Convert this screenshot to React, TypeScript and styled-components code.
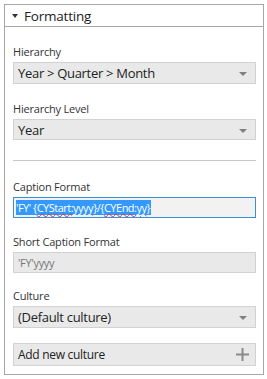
import React from 'react';
import styled, { createGlobalStyle } from 'styled-components';

const Global = createGlobalStyle`
  html, body {
    margin: 0;
    padding: 0;
    background: #ffffff;
  }
  body {
    font-family: "Open Sans", "Noto Sans", sans-serif;
    color: #222;
  }
`;

const Page = styled.div`
  width: 267px;
  height: 379px;
  padding: 4px 3px 4px 4px;
  box-sizing: border-box;
`;

const Panel = styled.div`
  height: 371px;
  border: 1px solid #a6a6a6;
  box-sizing: border-box;
  display: flex;
  flex-direction: column;
`;

const Header = styled.div`
  height: 21px;
  display: flex;
  align-items: center;
  gap: 6px;
  padding-left: 7px;
  border-bottom: 1px solid #a6a6a6;
  font-size: 13.5px;
  letter-spacing: -0.2px;
  color: #222;
`;

const Caret = styled.span`
  width: 0;
  height: 0;
  border-left: 3px solid transparent;
  border-right: 3px solid transparent;
  border-top: 4px solid #333;
`;

const Body = styled.div`
  padding: 17px 7px 0 8px;
  display: flex;
  flex-direction: column;
`;

const Field = styled.div<{ $gap?: number }>`
  display: flex;
  flex-direction: column;
  margin-bottom: ${(p) => p.$gap ?? 15}px;
`;

const Label = styled.div`
  font-size: 11px;
  letter-spacing: -0.2px;
  line-height: 16px;
  height: 16px;
  margin-bottom: 2px;
  color: #333;
`;

const Box = styled.div<{ $focus?: boolean; $h?: number }>`
  height: ${(p) => p.$h ?? 22}px;
  box-sizing: border-box;
  border: 1px solid ${(p) => (p.$focus ? '#3b8fd9' : '#d2d2d2')};
  background: ${(p) => (p.$focus ? '#f2f2f2' : '#e9e9e9')};
  display: flex;
  align-items: center;
  justify-content: space-between;
  padding: 0 8px 0 4px;
  overflow: hidden;
`;

const Value = styled.span<{ $size?: number; $muted?: boolean }>`
  font-size: ${(p) => p.$size ?? 13}px;
  letter-spacing: -0.3px;
  color: ${(p) => (p.$muted ? '#777' : '#222')};
  white-space: nowrap;
`;

const Selected = styled.span`
  background: #3399ff;
  color: #fff;
  font-size: 11px;
  letter-spacing: -0.5px;
  line-height: 15px;
  white-space: nowrap;
  padding-right: 1px;
`;

const Squiggle = styled.span`
  text-decoration: underline wavy #e03030;
  text-decoration-thickness: 1px;
  text-underline-offset: 1px;
`;

const Arrow = styled.span`
  width: 0;
  height: 0;
  border-left: 4px solid transparent;
  border-right: 4px solid transparent;
  border-top: 4px solid #808080;
  margin-top: 2px;
`;

const Divider = styled.div`
  height: 1px;
  background: #c6c6c6;
  margin: 4px 0 18px;
`;

const Plus = () => (
  <svg width="13" height="13" viewBox="0 0 13 13">
    <rect x="5.5" y="0" width="2" height="13" fill="#8a8a8a" />
    <rect x="0" y="5.5" width="13" height="2" fill="#8a8a8a" />
  </svg>
);

const App: React.FC = () => {
  return (
    <>
      <Global />
      <Page>
        <Panel>
          <Header>
            <Caret />
            <span>Formatting</span>
          </Header>
          <Body>
            <Field $gap={17}>
              <Label>Hierarchy</Label>
              <Box>
                <Value>Year &gt; Quarter &gt; Month</Value>
                <Arrow />
              </Box>
            </Field>
            <Field $gap={16}>
              <Label>Hierarchy Level</Label>
              <Box $h={21}>
                <Value>Year</Value>
                <Arrow />
              </Box>
            </Field>
            <Divider />
            <Field $gap={16}>
              <Label>Caption Format</Label>
              <Box $focus $h={21} style={{ paddingLeft: 2 }}>
                <Selected>
                  'FY' {'{'}
                  <Squiggle>CYStart:yyyy</Squiggle>
                  {'}/{'}
                  <Squiggle>CYEnd:yy</Squiggle>
                  {'}'}
                </Selected>
              </Box>
            </Field>
            <Field>
              <Label>Short Caption Format</Label>
              <Box $h={21}>
                <Value $size={11} $muted>'FY'yyyy</Value>
              </Box>
            </Field>
            <Field>
              <Label>Culture</Label>
              <Box>
                <Value>(Default culture)</Value>
                <Arrow />
              </Box>
            </Field>
            <Box $h={23} style={{ paddingRight: 6 }}>
              <Value $size={12}>Add new culture</Value>
              <Plus />
            </Box>
          </Body>
        </Panel>
      </Page>
    </>
  );
};

export default App;
